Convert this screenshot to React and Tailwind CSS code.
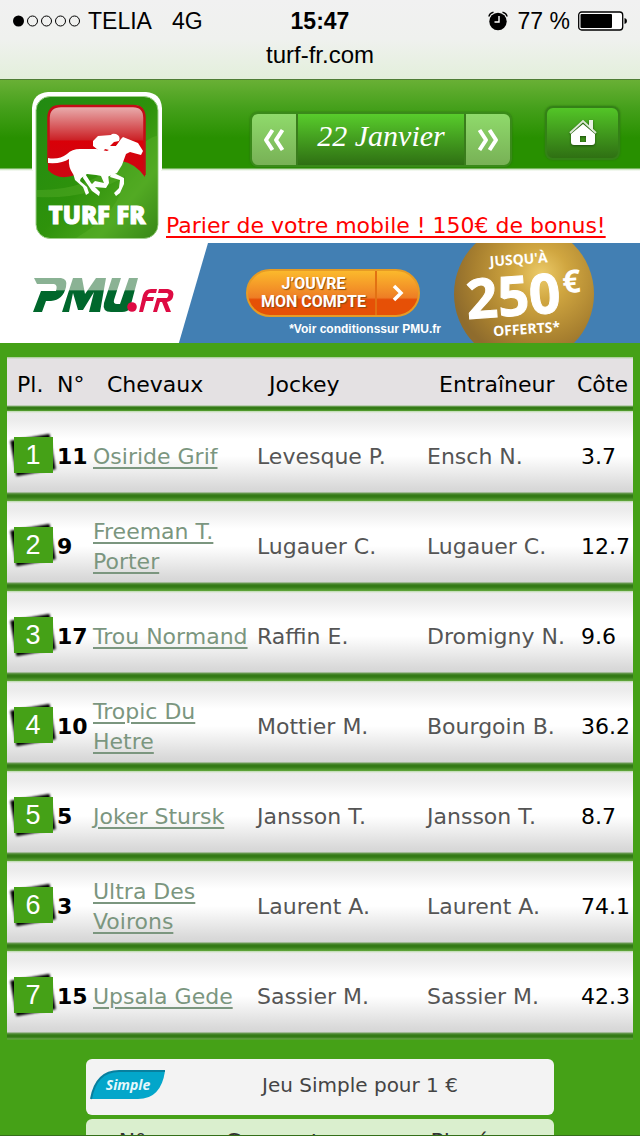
const RUNNERS = [
  { number: 11, horse: "Osiride Grif", jockey: "Levesque P.", trainer: "Ensch N.", odds: "3.7" },
  { number: 9, horse: "Freeman T. Porter", jockey: "Lugauer C.", trainer: "Lugauer C.", odds: "12.7" },
  { number: 17, horse: "Trou Normand", jockey: "Raffin E.", trainer: "Dromigny N.", odds: "9.6" },
  { number: 10, horse: "Tropic Du Hetre", jockey: "Mottier M.", trainer: "Bourgoin B.", odds: "36.2" },
  { number: 5, horse: "Joker Stursk", jockey: "Jansson T.", trainer: "Jansson T.", odds: "8.7" },
  { number: 3, horse: "Ultra Des Voirons", jockey: "Laurent A.", trainer: "Laurent A.", odds: "74.1" },
  { number: 15, horse: "Upsala Gede", jockey: "Sassier M.", trainer: "Sassier M.", odds: "42.3" },
];

const StatusBar = () => (
  <div className="h-20 shrink-0 border-b border-[#4f7d35] bg-linear-to-b from-[#f1f1f1] via-[#eff1ee] to-[#e3efdb] px-3 pt-2 font-['Liberation_Sans',sans-serif] text-[23px] leading-[26px] text-black">
    <div className="grid grid-cols-[1fr_auto_1fr] items-center">
      <div className="flex items-center">
        <svg width="70" height="14" viewBox="0 0 70 14" aria-hidden="true">
          <circle cx="6.5" cy="7" r="5.5" />
          {[20.5, 34.5, 48.5, 62.5].map((cx) => (
            <circle key={cx} cx={cx} cy="7" r="5" fill="none" stroke="#000" />
          ))}
        </svg>
        <span className="ml-1.5">TELIA</span>
        <span className="ml-5">4G</span>
      </div>
      <span className="font-bold">15:47</span>
      <div className="flex items-center justify-end">
        <svg width="20" height="20" viewBox="0 0 20 20" className="mr-2.5" aria-hidden="true">
          <circle cx="10" cy="10.5" r="8.7" />
          <path d="M1 5.5Q1.500 2 5.500 1.200M19 5.500Q18.500 2 14.500 1.200" fill="none" stroke="#000" strokeWidth="1.600" />
          <path d="M11 5v6H6.500" fill="none" stroke="#fff" strokeWidth="1.400" />
        </svg>
        <span>77 %</span>
        <svg width="50" height="20" viewBox="0 0 50 20" className="ml-2" aria-hidden="true">
          <rect x="0.7" y="1" width="44" height="18" rx="3" fill="#fff" stroke="#000" strokeWidth="1.300" />
          <rect x="2.500" y="3" width="31.500" height="14" rx="1" />
          <path d="M46.500 7q2.500 0.500 2.500 3t-2.500 3z" />
        </svg>
      </div>
    </div>
    <div className="mt-2 text-center text-2xl leading-[26px]">turf-fr.com</div>
  </div>
);

const Logo = () => (
  <svg width="130" height="151" viewBox="0 0 130 151" role="img" aria-label="Turf FR">
    <defs>
      <linearGradient id="plate" x1="0" y1="0" x2="1" y2="1">
        <stop offset="0" stopColor="#218a12" />
        <stop offset="0.500" stopColor="#2e920b" />
        <stop offset="0.750" stopColor="#4ba51d" />
        <stop offset="1" stopColor="#216f09" />
      </linearGradient>
      <linearGradient id="flag" x1="0" y1="0" x2="0" y2="1">
        <stop offset="0" stopColor="#eab5b5" />
        <stop offset="0.480" stopColor="#cc2227" />
        <stop offset="0.500" stopColor="#d90008" />
        <stop offset="1" stopColor="#cc0713" />
      </linearGradient>
    </defs>
    <path d="M0 16Q1 1 16 0H114Q129 1 130 16V78H0Z" fill="#fff" />
    <rect x="1" y="2" width="128" height="147" rx="17" fill="#fff" />
    <rect x="4" y="4.500" width="122" height="142" rx="14" fill="url(#plate)" stroke="#9fd08a" strokeWidth="1" />
    <path d="M5 98Q54 99 89 69T126 45V132Q126 143 114 146H44Q89 120 93 84Q56 108 5 105Z" fill="#60b532" opacity="0.350" />
    <path d="M16 26Q16 14 29 13H101Q113 13 113 26V85Q103 71 89 69Q80 67 70 72L40 84Q25 88 16 78Z" fill="url(#flag)" />
    <path d="M16.500 71V26Q16.500 14 29 14H101Q112.500 14 112.500 26V83" fill="none" stroke="#c30d16" strokeWidth="2.500" />
    <g fill="#fff">
      <path d="M16 66Q27 68 35 62Q40 57 48 57H64L75 59L84 54L89 47L91 45L106 51L111 59L109 63L98 60L94 62L90 73L85 81L75 85L64 83L55 82L48 87L41 82Q36 75 37 67Q30 72 16 71Z" />
      <path d="M61 54L61 49L66 44L79 43Q80 41 84 42Q89 44 87 49L82 50L78 54L84 54L90 49L92 53L81 59L73 57L70 61Z" />
      <path d="M42 78L49 85L48 89L55 95L57 101L54 103L51 95L43 88L41 81ZM52 80L59 91L68 100L67 104L60 99L51 86ZM66 80L76 82L77 91L74 96L63 95L60 92L63 89L72 91L69 84ZM80 80L92 86L92 92L88 101L84 104L82 101L87 96L88 88L78 85Z" />
    </g>
    <text x="65" y="132" textAnchor="middle" fontFamily="Open Sans, sans-serif" fontWeight="800" fontSize="24" fill="#fff" stroke="#fff" strokeWidth="1">TURF FR</text>
  </svg>
);

const Chevrons = ({ flip }) => (
  <svg width="24" height="24" viewBox="0 0 24 24" className={flip ? "-scale-x-100" : ""} aria-hidden="true">
    <path d="M10.500 2L4 12l6.500 10M20.500 2l-6.500 10 6.500 10" fill="none" stroke="#fff" strokeWidth="4" strokeLinejoin="round" />
  </svg>
);

const Header = () => (
  <header className="flex h-[163px] bg-[linear-gradient(to_bottom,#69b035_0px,#45a01b_28px,#289000_58px,#289000_88px,#c5dfb8_89px,#ffffff_91px)] pl-8">
    <a href="#accueil" className="shrink-0 pt-3">
      <Logo />
    </a>
    <div className="flex grow flex-col justify-between">
      <div className="flex items-start justify-between pr-5 pl-[88px] pt-6">
        <div className="mt-2 flex h-[55px] overflow-hidden rounded-lg border-2 border-[#3a8a1a] shadow-[0_0_2px_#2c6e12]">
          <button type="button" aria-label="Jour précédent" className="flex w-[44px] items-center justify-center bg-linear-to-b from-[#8fda6b] to-[#78b156]">
            <Chevrons />
          </button>
          <div className="flex w-[170px] justify-center border-x-2 border-[#3a7d1c] bg-linear-to-b from-[#58cc2c] to-[#2f7013] pt-1 font-['Liberation_Serif',serif] text-[30px] leading-[36px] text-white italic">
            22 Janvier
          </div>
          <button type="button" aria-label="Jour suivant" className="flex w-[44px] items-center justify-center bg-linear-to-b from-[#8fda6b] to-[#78b156]">
            <Chevrons flip />
          </button>
        </div>
        <a
          href="#accueil"
          aria-label="Accueil"
          className="mt-0.5 flex h-[54px] w-[75px] items-center justify-center rounded-lg border-2 border-[#348117] bg-linear-to-b from-[#53c527] to-[#2f7013] shadow-[0_0_2px_#2c6e12]"
        >
          <svg width="30" height="30" viewBox="0 0 30 30" className="drop-shadow-[0_1px_1px_#1d4d0b]" aria-hidden="true">
            <path d="M2 15L15 3l13 12" fill="none" stroke="#dbe8d4" strokeWidth="2" />
            <path d="M21 2h4v11l-4-4z" fill="#e8f0e4" />
            <path d="M15 6L3 16v8q0 3 3 3h18q3 0 3-3v-8zM12 18h6v6h-6z" fill="#fff" fillRule="evenodd" />
          </svg>
        </a>
      </div>
      <a href="#bonus" className="pb-[3px] pl-1 font-['DejaVu_Sans',sans-serif] text-[22px] leading-[28px] whitespace-nowrap text-[#ff0000] underline underline-offset-3">
        Parier de votre mobile ! 150€ de bonus!
      </a>
    </div>
  </header>
);

const Banner = () => (
  <div className="flex h-[100px] overflow-hidden bg-[#427fb3]">
    <div className="flex w-[208px] shrink-0 items-center bg-white pt-1 pl-8 [clip-path:polygon(0_0,100%_0,86%_100%,0_100%)]">
      <svg width="144" height="42" viewBox="0 0 144 42" role="img" aria-label="PMU.fr">
        <defs>
          <linearGradient id="pmu" x1="0" y1="0" x2="0" y2="42" gradientUnits="userSpaceOnUse">
            <stop offset="0.380" stopColor="#8ab294" />
            <stop offset="0.400" stopColor="#00672c" />
          </linearGradient>
        </defs>
        <path d="M2 4H29Q36 5 34 13Q31 26 19 27H14L10 38H1L9 17H24Q26 11 22 10H5ZM41 4H50L53 20L64 4H74L68 38H57L62 18L51 36H46L41 19L37 38H30ZM80 4H89L82 26Q81 30 85 30H88L97 4H106L98 34Q96 38 90 38H79Q70 38 72 29Z" fill="url(#pmu)" />
        <circle cx="100" cy="33" r="4.800" fill="#de0b43" />
        <path d="M107 38L111 21Q113 15 119 15H125L124 19H118Q116 19 115 23H122L121 27H114L111 38ZM127 15H136Q143 16 141 23Q140 27 135 28L139 38H134L130 28H128L125 38H121L125 24H135Q138 20 135 19H126Z" fill="#de0b43" />
      </svg>
    </div>
    <div className="flex w-[246px] flex-col items-end pt-[26px] pr-[13px] text-white">
      <a href="#compte" className="mr-[21px] flex h-[48px] w-[174px] overflow-hidden rounded-full border-2 border-[#e69b25] bg-linear-to-b from-[#fbb92c] from-0% via-[#ee7e25] via-60% to-[#e65006] to-65% font-['Roboto',sans-serif] text-base leading-[18px] font-bold [text-shadow:1px_1px_1px_#8a4a10]">
        <span className="flex grow flex-col justify-center pl-3 text-center whitespace-nowrap">
          <span>J’OUVRE</span>
          <span>MON COMPTE</span>
        </span>
        <span className="ml-2 flex w-[43px] shrink-0 items-center justify-center border-l-2 border-[#e27113]">
          <svg width="14" height="20" viewBox="0 0 14 20" aria-hidden="true">
            <path d="M3 3l7 7-7 7" fill="none" stroke="#fff" strokeWidth="3.500" />
          </svg>
        </span>
      </a>
      <span className="mt-1 font-['Liberation_Sans',sans-serif] text-xs leading-4 font-bold whitespace-nowrap">*Voir conditionssur PMU.fr</span>
    </div>
    <svg width="140" height="100" viewBox="0 0 140 100" className="shrink-0" role="img" aria-label="Jusqu'à 250€ offerts">
      <defs>
        <radialGradient id="gold" cx="0.620" cy="0.360" r="0.640">
          <stop offset="0" stopColor="#eccb6a" />
          <stop offset="0.300" stopColor="#d0a640" />
          <stop offset="0.750" stopColor="#a8802f" />
          <stop offset="1" stopColor="#8f6c2d" />
        </radialGradient>
      </defs>
      <circle cx="70" cy="51" r="70" fill="url(#gold)" />
      <g fill="#fff" fontFamily="Open Sans, sans-serif" fontWeight="700" textAnchor="middle" transform="rotate(-4 70 50)">
        <text x="67" y="21" fontSize="14">JUSQU'À</text>
        <text x="59" y="72" fontSize="55" stroke="#fff" strokeWidth="1">250</text>
        <text x="118" y="53" fontSize="32">€</text>
        <text x="70" y="91" fontSize="14">OFFERTS*</text>
      </g>
    </svg>
  </div>
);

const Place = ({ value }) => (
  <span className="relative mb-1 ml-1.5 flex h-9 w-10 items-center justify-center">
    <span className="absolute inset-0 -rotate-10 bg-black blur-[1px]" />
    <span className="relative flex h-9 w-[39px] items-center justify-center bg-[#45a117] font-['Liberation_Sans',sans-serif] text-[27px] leading-none text-white">{value}</span>
  </span>
);

const Results = () => (
  <table className="w-full table-fixed border-collapse text-left text-[22px] leading-[30px]">
    <colgroup>
      <col className="w-[50px]" />
      <col className="w-[36px]" />
      <col />
      <col className="w-[170px]" />
      <col className="w-[154px]" />
      <col className="w-[52px]" />
    </colgroup>
    <thead>
      <tr className="h-[54px] bg-[linear-gradient(to_bottom,#9fcb88_0px,#e4e1e3_2px,#e4e1e3_48px,#93b983_49px,#347a16_50px,#347a16_52px,#58a332_54px)] text-black [&>th]:p-0 [&>th]:pt-0.5 [&>th]:font-normal [&>th]:whitespace-nowrap">
        <th scope="col"><span className="pl-2.5">Pl.</span></th>
        <th scope="col">N°</th>
        <th scope="col"><span className="pl-3.5">Chevaux</span></th>
        <th scope="col"><span className="pl-3">Jockey</span></th>
        <th scope="col"><span className="pl-3">Entraîneur</span></th>
        <th scope="col"><span className="-ml-1">Côte</span></th>
      </tr>
    </thead>
    <tbody>
      {RUNNERS.map((runner, index) => (
        <tr
          key={runner.number}
          className="h-[90px] bg-[linear-gradient(to_bottom,#b9daaa_0px,#ebebeb_2px,#ececec_9px,#ffffff_28px,#ffffff_45px,#dadada_76px,#d6d6d6_81px,#6f9e59_82px,#347a16_84px,#347a16_86px,#62a83c_90px)] text-[#555555] last:bg-[linear-gradient(to_bottom,#b9daaa_0px,#ebebeb_2px,#ececec_9px,#ffffff_28px,#ffffff_45px,#dadada_76px,#d6d6d6_81px,#6f9e59_82px,#347a16_84px,#347a16_86px,#67a348_88px,#45a117_89px)] [&>td]:p-0 [&>td]:pt-0.5 [&>td]:whitespace-nowrap"
        >
          <td><Place value={index + 1} /></td>
          <td className="font-bold text-black">{runner.number}</td>
          <td>
            <a href="#cheval" className="block whitespace-normal text-[#7b967f] underline underline-offset-3">{runner.horse}</a>
          </td>
          <td>{runner.jockey}</td>
          <td>{runner.trainer}</td>
          <td className="text-black">{runner.odds}</td>
        </tr>
      ))}
    </tbody>
  </table>
);

const Payouts = () => (
  <section className="mx-auto mt-[18px] w-[73%] text-[#444444]">
    <div className="flex h-[56px] items-center rounded-md bg-[#f3f3f3] pb-1 pl-1 text-xl leading-[26px]">
      <svg width="76" height="32" viewBox="0 0 76 32" role="img" aria-label="Simple">
        <path d="M1 30Q6 2 29 2H75Q71 30 48 30Z" fill="#03a6ca" />
        <path d="M1 30Q6 2 29 2H75" fill="none" stroke="#087f9e" strokeWidth="2" />
        <text x="38" y="21" textAnchor="middle" fontFamily="Open Sans, sans-serif" fontWeight="700" fontStyle="italic" fontSize="14" fill="#e5f8fc">Simple</text>
      </svg>
      <span className="grow text-center">Jeu Simple pour 1 €</span>
    </div>
    <table className="mt-1 w-full table-fixed rounded-md bg-[#daefce] text-[22px] leading-[30px] text-[#333333]">
      <thead>
        <tr className="[&>th]:pt-2 [&>th]:pb-3 [&>th]:text-center [&>th]:font-normal">
          <th scope="col" className="w-[92px]">N°</th>
          <th scope="col">Gagnant</th>
          <th scope="col">Placé</th>
        </tr>
      </thead>
    </table>
  </section>
);

export default function App() {
  return (
    <div className="flex h-screen flex-col bg-[#45a117] font-['DejaVu_Sans',sans-serif]">
      <StatusBar />
      <main className="min-h-0 grow overflow-y-auto border-b border-[#356f19] [scrollbar-width:none]">
        <Header />
        <Banner />
        <div className="px-[7px] pt-3.5">
          <Results />
        </div>
        <Payouts />
      </main>
    </div>
  );
}
